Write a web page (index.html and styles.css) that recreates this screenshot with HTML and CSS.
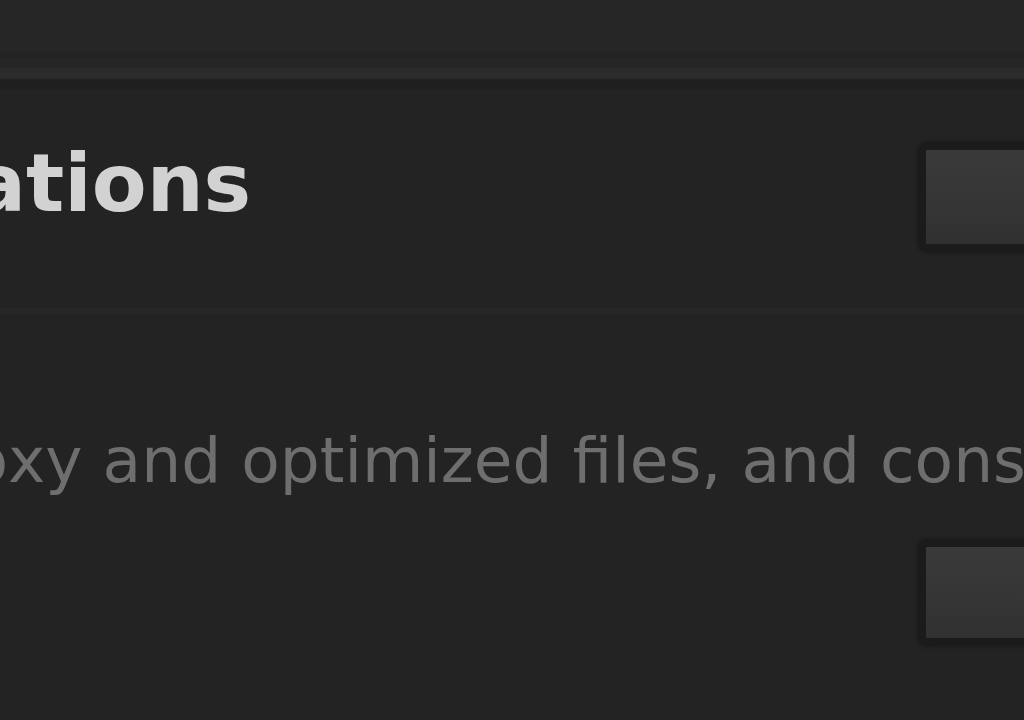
FILE: index.html
```html
<!doctype html>
<html>
<head>
<meta charset="utf-8">
<title>Library Properties</title>
<link rel="stylesheet" href="styles.css">
</head>
<body>
	<div class="frame">
		<div class="page">

			<!-- top toolbar edge -->
			<div class="topbar"></div>
			<div class="rule"></div>

			<!-- storage locations -->
			<section class="head-row">
				<h1 class="title"><span class="cut"><span>Storage Loca</span></span>tions</h1>
				<button class="btn" type="button">Modify Settings</button>
			</section>

			<div class="sep"></div>

			<!-- media section -->
			<section class="desc-row">
				<p class="desc"><span class="cut narrow"><span>Set storage locations for media, pro</span></span>xy and optimized files, and consolidated media</p>
				<div class="actions">
					<button class="btn low" type="button">Consolidate</button>
				</div>
			</section>

			<div class="footer"></div>
		</div>
	</div>
</body>
</html>
```

FILE: styles.css
```css
/*Page*/
html, body{
	margin: 0;
	padding: 0;
	background: #232323;
}

.frame{
	width: 1024px;
	height: 720px;
	overflow: hidden;
}

.page{
	width: 1318px;
	background: #232323;
}

/*Bands*/
.topbar{
	height: 68px;
	background: linear-gradient(#262626 0, #262626 52px, #232323 54px, #232323 57px, #262626 59px, #262626 100%);
}

.rule{
	height: 22px;
	background: linear-gradient(#2b2b2b 0, #2c2c2c 10px, #1f1f1f 12px, #202020 100%);
}

.sep{
	height: 6px;
	background: #272727;
}

.footer{
	height: 22px;
	background: linear-gradient(#232323 0, #1f1f1f 2px, #1f1f1f 7px, #2a2a2a 10px, #2a2a2a 100%);
}

/*Clipped leading text*/
.cut{
	display: inline-flex;
	justify-content: flex-end;
	overflow: hidden;
	width: 26px;
	vertical-align: top;
	white-space: nowrap;
}
.cut span{
	flex-shrink: 0;
}
.cut.narrow{
	width: 8px;
}

/*Heading row*/
.head-row{
	height: 218px;
	display: grid;
	grid-template-columns: 1fr 400px;
	align-items: start;
}

.title{
	margin: 54px 0 0 0;
	font-family: "DejaVu Sans", sans-serif;
	font-weight: bold;
	font-size: 80px;
	line-height: 80px;
	color: #d2d2d2;
	white-space: nowrap;
}

/*Buttons*/
.btn{
	margin-top: 52px;
	width: 400px;
	height: 110px;
	border: 8px solid #1b1b1b;
	border-radius: 9px;
	background: linear-gradient(#3a3a3a, #313131);
	box-shadow: 0 0 4px rgba(0,0,0,0.35);
	font-family: "DejaVu Sans", sans-serif;
	font-size: 48px;
	color: #cfcfcf;
	text-align: left;
	white-space: nowrap;
	overflow: hidden;
	padding: 0 0 0 140px;
}
.btn.low{
	margin-top: 47px;
	height: 107px;
}

/*Description row*/
.desc-row{
	height: 383px;
}

.desc{
	margin: 115px 0 0 0;
	font-family: "DejaVu Sans", sans-serif;
	font-size: 63px;
	line-height: 63px;
	color: #6e6e6e;
	white-space: nowrap;
}

.actions{
	display: flex;
	justify-content: flex-end;
}
```
